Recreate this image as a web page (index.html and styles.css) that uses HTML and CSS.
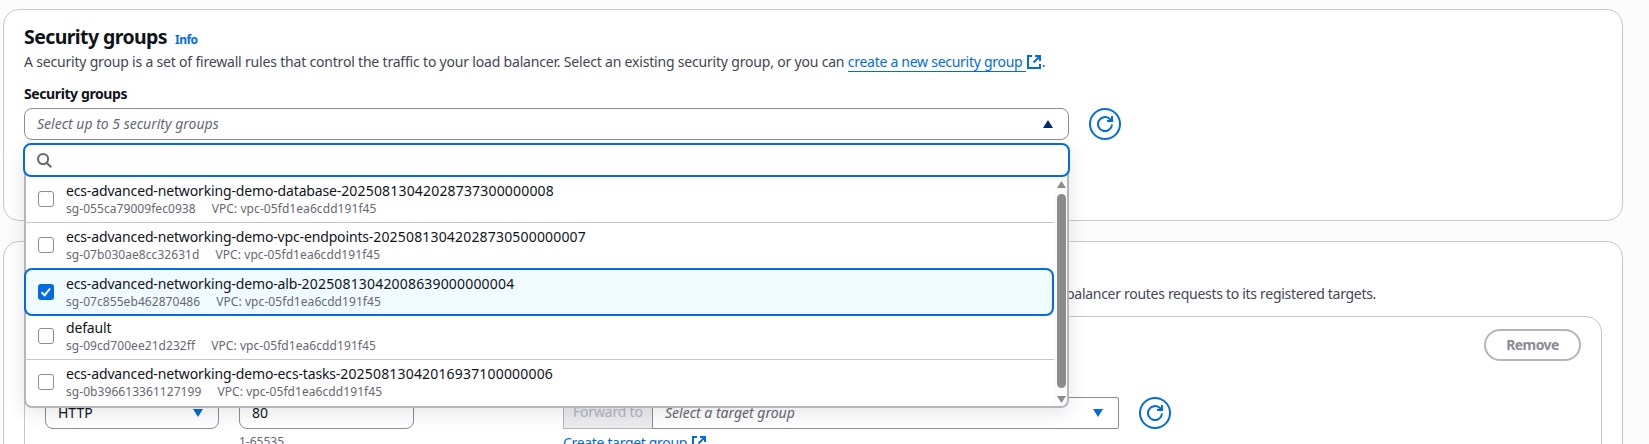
FILE: index.html
```html
<!DOCTYPE html>
<html lang="en">
<head>
<meta charset="utf-8">
<title>Security groups</title>
<link rel="stylesheet" href="styles.css">
</head>
<body>
<svg class="sprite" aria-hidden="true">
  <symbol id="refresh" viewBox="0 0 16 16"><path d="M15 8.5A7 7 0 1 1 12.6 2.8L14.6 4.6M15 0v5h-5"/></symbol>
  <symbol id="external" viewBox="0 0 14 14"><path d="M5 1H1v12h12V9M8 1h5v5M12.6 1.4 6.5 7.5"/></symbol>
</svg>
<main class="page">
  <section class="card security">
    <div class="heading"><h2 class="title">Security groups</h2><a class="info">Info</a></div>
    <p class="description"><span class="lead">A security group is a set of firewall rules that control the traffic to your load balancer. Select an existing security group, or you can </span><a class="link underlined">create a new security group</a><svg class="external"><use href="#external"/></svg>.</p>
    <label class="label">Security groups</label>
    <div class="field-row">
      <div class="select trigger"><span class="placeholder">Select up to 5 security groups</span><i class="caret up"></i>
        <div class="dropdown">
          <div class="search"><svg class="search-icon" viewBox="0 0 16 16"><circle cx="6.5" cy="6.5" r="5.4"/><path d="M10.3 10.3 15.2 15.2"/></svg></div>
          <div class="panel">
            <ul class="options">
              <li class="option first"><i class="box"></i><div><div class="name"><span class="prefix">ecs-advanced-networking-demo-database-</span><span class="digits">20250813042028737300000008</span></div><div class="meta"><span class="sg">sg-055ca79009fec0938</span><span class="vpc">VPC: vpc-05fd1ea6cdd191f45</span></div></div></li>
              <li class="option second"><i class="box"></i><div><div class="name"><span class="prefix">ecs-advanced-networking-demo-vpc-endpoints-</span><span class="digits">20250813042028730500000007</span></div><div class="meta"><span class="sg">sg-07b030ae8cc32631d</span><span class="vpc">VPC: vpc-05fd1ea6cdd191f45</span></div></div></li>
              <li class="option selected"><i class="box checked"><svg viewBox="0 0 16 16"><path d="M3.5 8.2 6.7 11.2 12 4.5"/></svg></i><div><div class="name"><span class="prefix">ecs-advanced-networking-demo-alb-</span><span class="digits">20250813042008639000000004</span></div><div class="meta"><span class="sg">sg-07c855eb462870486</span><span class="vpc">VPC: vpc-05fd1ea6cdd191f45</span></div></div></li>
              <li class="option fourth"><i class="box"></i><div><div class="name"><span class="prefix">default</span></div><div class="meta"><span class="sg">sg-09cd700ee21d232ff</span><span class="vpc">VPC: vpc-05fd1ea6cdd191f45</span></div></div></li>
              <li class="option last"><i class="box"></i><div><div class="name"><span class="prefix">ecs-advanced-networking-demo-ecs-tasks-</span><span class="digits">20250813042016937100000006</span></div><div class="meta"><span class="sg">sg-0b396613361127199</span><span class="vpc">VPC: vpc-05fd1ea6cdd191f45</span></div></div></li>
            </ul>
            <div class="scrollbar"><i class="arrow-up"></i><i class="thumb"></i><i class="arrow-down"></i></div>
          </div>
        </div>
      </div>
      <button class="round"><svg><use href="#refresh"/></svg></button>
    </div>
  </section>
  <section class="card listeners">
    <p class="description routing"><span class="rest">balancer routes requests to its registered targets.</span></p>
    <div class="listener">
      <div class="actions"><button class="remove"><span>Remove</span></button></div>
      <div class="fields">
        <div class="protocol select"><span>HTTP</span><i class="caret down"></i></div>
        <div class="port"><div class="select"><span>80</span></div><span class="hint">1-65535</span></div>
        <div class="target">
          <div class="joined"><div class="forward"><span>Forward to</span></div><div class="select square"><span class="placeholder">Select a target group</span><i class="caret down"></i></div></div>
          <div class="create"><a class="link">Create target group</a><svg class="external"><use href="#external"/></svg></div>
        </div>
        <button class="round"><svg><use href="#refresh"/></svg></button>
      </div>
    </div>
  </section>
</main>
</body>
</html>
```
FILE: styles.css
```css
* { box-sizing: border-box; }
body { margin: 0; height: 444px; overflow: hidden; background: #fcfcfd; color: #0f141a; font: 14px/20px "Noto Sans", sans-serif; }
h2, p, ul { margin: 0; padding: 0; }
button { background: #fff; font: inherit; padding: 0; }
.sprite { display: none; }
.page { display: flex; flex-direction: column; gap: 20px; padding: 9px 26px 0 3px; height: 444px; overflow: hidden; }
.card { flex: none; border: 1px solid #c6c6cd; border-radius: 16px; background: #fff; padding: 0 20px; }
.security { height: 212px; padding-top: 15px; }
.heading { display: flex; align-items: baseline; gap: 8px; height: 27px; }
.title { font-size: 19.5px; line-height: 24px; font-weight: 700; letter-spacing: -.6px; }
.info { color: #006ce0; font-size: 12px; font-weight: 700; letter-spacing: -.5px; }
.description { height: 22px; color: #424650; white-space: nowrap; }
.lead { white-space: pre; letter-spacing: -.19px; }
.link { color: #006ce0; letter-spacing: -.27px; }
.underlined { display: inline-block; width: 178px; height: 20px; border-bottom: 1px solid #006ce0; }
.external { width: 14px; height: 14px; fill: none; stroke: #006ce0; stroke-width: 2; margin: 0 1px; vertical-align: -2px; }
.label { display: block; margin-top: 10px; height: 24px; font-weight: 700; letter-spacing: -.4px; }
.field-row { display: flex; gap: 20px; }
.select { display: flex; align-items: center; justify-content: space-between; height: 32px; border: 1px solid #8c8c94; border-radius: 8px; background: #fff; padding: 0 15px 0 12px; white-space: nowrap; }
.trigger { position: relative; width: 1045px; }
.placeholder { color: #656871; font-style: italic; }
.caret { width: 10px; height: 8px; background: #006ce0; }
.caret.up { background: #002b66; clip-path: polygon(50% 0, 100% 100%, 0 100%); }
.caret.down { clip-path: polygon(0 0, 100% 0, 50% 100%); }
.round { display: flex; align-items: center; justify-content: center; width: 32px; height: 32px; border: 2px solid #006ce0; border-radius: 50%; }
.round svg { width: 16px; height: 16px; fill: none; stroke: #006ce0; stroke-width: 2; }

.dropdown { position: absolute; z-index: 5; left: -2px; top: 34px; width: 1047px; }
.search { position: relative; z-index: 1; display: flex; align-items: center; height: 34px; border: 2px solid #006ce0; border-radius: 8px; background: #fff; padding-left: 12px; }
.search-icon { width: 15px; height: 15px; fill: none; stroke: #656871; stroke-width: 2.2; }
.panel { display: flex; justify-content: space-between; height: 263px; margin: -32px 1px 0; padding-top: 32px; border: 2px solid #b4b4bb; border-top: 0; border-radius: 8px; background: #fff; box-shadow: 0 4px 20px 1px rgba(0, 7, 22, .1); }
.options { width: 1029px; margin-left: -1px; list-style: none; }
.option { display: flex; align-items: center; gap: 12px; padding-left: 13px; border-bottom: 1px solid #c6c6cd; }
.first { height: 46px; padding-bottom: 1px; }
.second { height: 45px; padding-bottom: 1px; border-bottom: 0; }
.selected { height: 48px; border: 2px solid #006ce0; border-radius: 8px; background: #f0fbff; padding-left: 12px; margin-left: -1px; }
.fourth { height: 44px; padding-bottom: 3px; }
.last { height: 44px; border-bottom: 0; }
.box { width: 16px; height: 16px; border: 1px solid #8c8c94; border-radius: 3px; background: #fff; }
.checked { background: #006ce0; border: 0; }
.checked svg { display: block; fill: none; stroke: #fff; stroke-width: 2; }
.name { line-height: 19px; white-space: nowrap; }
.prefix { letter-spacing: -.15px; }
.digits { letter-spacing: .175px; }
.meta { display: flex; gap: 16px; color: #656871; font-size: 12px; line-height: 17px; white-space: nowrap; }
.sg { letter-spacing: .06px; }
.vpc { letter-spacing: .07px; }
.scrollbar { display: flex; flex-direction: column; align-items: center; width: 13px; padding: 4px 1px 3px 3px; background: #fcfcfc; border-radius: 0 0 6px 0; }
.thumb { width: 9px; height: 194px; margin: 6px 0 8px; border-radius: 5px; background: #8b8b8b; }
.arrow-up, .arrow-down { width: 9px; height: 7px; background: #8b8b8b; clip-path: polygon(50% 0, 100% 100%, 0 100%); }
.arrow-down { clip-path: polygon(0 0, 100% 0, 50% 100%); }

.listeners { height: 260px; padding-top: 42px; }
.routing { display: flex; height: 32px; padding-left: 1042px; letter-spacing: -.29px; }
.listener { height: 200px; border: 1px solid #c6c6cd; border-radius: 16px; padding: 12px 20px; }
.actions { display: flex; justify-content: flex-end; }
.remove { width: 97px; height: 32px; border: 2px solid #b4b4bb; border-radius: 16px; color: #8c8c94; font-weight: 700; letter-spacing: -.6px; }
.fields { display: flex; gap: 20px; margin-top: 36px; }
.protocol { width: 174px; }
.port { width: 304px; }
.port .select { width: 175px; }
.hint { display: block; margin-top: 3px; color: #656871; font-size: 12px; }
.target { width: 556px; }
.joined { display: flex; }
.forward { width: 89px; height: 32px; border: 1px solid #b4b4bb; border-right: 0; background: #ebebf0; color: #b4b4bb; padding: 4px 0 0 9px; letter-spacing: -.2px; white-space: nowrap; }
.square { flex: 1; border-radius: 0 2px 2px 0; }
.create { display: flex; align-items: center; gap: 4px; margin-top: 4px; white-space: nowrap; }
.create .link { letter-spacing: -.33px; }
```
